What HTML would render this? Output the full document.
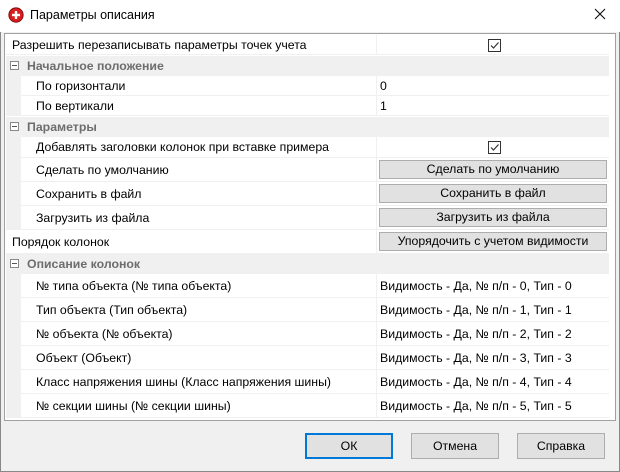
<!DOCTYPE html>
<html><head><meta charset="utf-8"><style>
*{margin:0;padding:0;box-sizing:border-box}
body{width:620px;height:472px;background:#f0f0f0;font-family:"Liberation Sans","DejaVu Sans",sans-serif;font-size:12.3px;color:#000;position:relative;overflow:hidden}
.win{position:absolute;left:0;top:0;width:620px;height:472px;border:1px solid #888;border-top:none}
.title{position:absolute;left:0;top:0;width:620px;height:32px;background:#fff}
.title span{position:absolute;left:30px;top:8px;font-size:12.5px}
.x{position:absolute;left:594px;top:8px}
.grid{position:absolute;left:4px;top:33px;width:612px;height:388px;border:1px solid #a0a0a0;background:#fff}
.r{position:absolute;left:1px;width:603px;border-bottom:1px solid #f0f0f0;background:#fff}
.r .l{position:absolute;left:0;top:0;bottom:0;width:371px;border-right:1px solid #f0f0f0}
.r .t{position:absolute;top:50%;transform:translateY(-50%);white-space:nowrap}
.r.s{background:#f0f0f0;border-bottom:none}
.r.s .t{left:21px;color:#6d6d6d;font-weight:bold}
.r.s .m{position:absolute;left:4px;top:5px;width:9px;height:9px;border:1px solid #888;background:#fff}
.r.s .m:after{content:"";position:absolute;left:1px;top:3px;width:5px;height:1px;background:#555}
.ind{position:absolute;left:0;top:0;bottom:-1px;width:15px;background:#f0f0f0}
.v{position:absolute;left:374px;top:50%;transform:translateY(-50%);white-space:nowrap}
.cb{position:absolute;left:482px;top:50%;margin-top:-6px;width:13px;height:13px;border:1px solid #333;background:#fff}
.btn{position:absolute;left:373px;width:228px;height:19px;top:2px;background:#e1e1e1;border:1px solid #adadad;text-align:center;line-height:17px}
.b{position:absolute;top:433px;width:88px;height:26px;background:#e1e1e1;border:1px solid #adadad;text-align:center;line-height:24px}
</style></head><body>
<div class="win"></div>
<div class="title">
<svg style="position:absolute;left:8px;top:7px" width="16" height="16" viewBox="0 0 16 16"><circle cx="8" cy="8" r="7.2" fill="#d81e1e" stroke="#700" stroke-width="0.8"/><rect x="6.8" y="4" width="2.4" height="8" fill="#fff"/><rect x="4" y="6.8" width="8" height="2.4" fill="#fff"/></svg>
<span>Параметры описания</span>
<svg class="x" width="12" height="12" viewBox="0 0 12 12"><path d="M1 1L11 11M11 1L1 11" stroke="#000" stroke-width="1"/></svg>
</div>
<div class="grid">
<div class="r" style="top:1px;height:20px"><div class="l"></div><span class="t" style="left:6px">Разрешить перезаписывать параметры точек учета</span><div class="cb"><svg width="11" height="11" viewBox="0 0 11 11"><path d="M2 5.5L4.5 8L9.5 2.5" stroke="#333" fill="none" stroke-width="1.2"/></svg></div></div>
<div class="r s" style="top:22px;height:20px"><div class="m"></div><span class="t">Начальное положение</span></div>
<div class="r" style="top:42px;height:20px"><div class="ind"></div><div class="l"></div><span class="t" style="left:30px">По горизонтали</span><span class="v">0</span></div>
<div class="r" style="top:62px;height:20px"><div class="ind"></div><div class="l"></div><span class="t" style="left:30px">По вертикали</span><span class="v">1</span></div>
<div class="r s" style="top:83px;height:20px"><div class="m"></div><span class="t">Параметры</span></div>
<div class="r" style="top:103px;height:21px"><div class="ind"></div><div class="l"></div><span class="t" style="left:30px">Добавлять заголовки колонок при вставке примера</span><div class="cb"><svg width="11" height="11" viewBox="0 0 11 11"><path d="M2 5.5L4.5 8L9.5 2.5" stroke="#333" fill="none" stroke-width="1.2"/></svg></div></div>
<div class="r" style="top:124px;height:24px"><div class="ind"></div><div class="l"></div><span class="t" style="left:30px">Сделать по умолчанию</span><div class="btn">Сделать по умолчанию</div></div>
<div class="r" style="top:148px;height:24px"><div class="ind"></div><div class="l"></div><span class="t" style="left:30px">Сохранить в файл</span><div class="btn">Сохранить в файл</div></div>
<div class="r" style="top:172px;height:24px"><div class="ind"></div><div class="l"></div><span class="t" style="left:30px">Загрузить из файла</span><div class="btn">Загрузить из файла</div></div>
<div class="r" style="top:196px;height:24px"><div class="l"></div><span class="t" style="left:6px">Порядок колонок</span><div class="btn">Упорядочить с учетом видимости</div></div>
<div class="r s" style="top:220px;height:20px"><div class="m"></div><span class="t">Описание колонок</span></div>
<div class="r" style="top:240px;height:24px"><div class="ind"></div><div class="l"></div><span class="t" style="left:30px">№ типа объекта (№ типа объекта)</span><span class="v">Видимость - Да, № п/п - 0, Тип - 0</span></div>
<div class="r" style="top:264px;height:24px"><div class="ind"></div><div class="l"></div><span class="t" style="left:30px">Тип объекта (Тип объекта)</span><span class="v">Видимость - Да, № п/п - 1, Тип - 1</span></div>
<div class="r" style="top:288px;height:24px"><div class="ind"></div><div class="l"></div><span class="t" style="left:30px">№ объекта (№ объекта)</span><span class="v">Видимость - Да, № п/п - 2, Тип - 2</span></div>
<div class="r" style="top:312px;height:24px"><div class="ind"></div><div class="l"></div><span class="t" style="left:30px">Объект (Объект)</span><span class="v">Видимость - Да, № п/п - 3, Тип - 3</span></div>
<div class="r" style="top:336px;height:24px"><div class="ind"></div><div class="l"></div><span class="t" style="left:30px">Класс напряжения шины (Класс напряжения шины)</span><span class="v">Видимость - Да, № п/п - 4, Тип - 4</span></div>
<div class="r" style="top:360px;height:24px"><div class="ind"></div><div class="l"></div><span class="t" style="left:30px">№ секции шины (№ секции шины)</span><span class="v">Видимость - Да, № п/п - 5, Тип - 5</span></div>
</div>
<div class="b" style="left:305px;border:2px solid #0078d7;line-height:22px">ОК</div>
<div class="b" style="left:411px">Отмена</div>
<div class="b" style="left:517px">Справка</div>
</body></html>
